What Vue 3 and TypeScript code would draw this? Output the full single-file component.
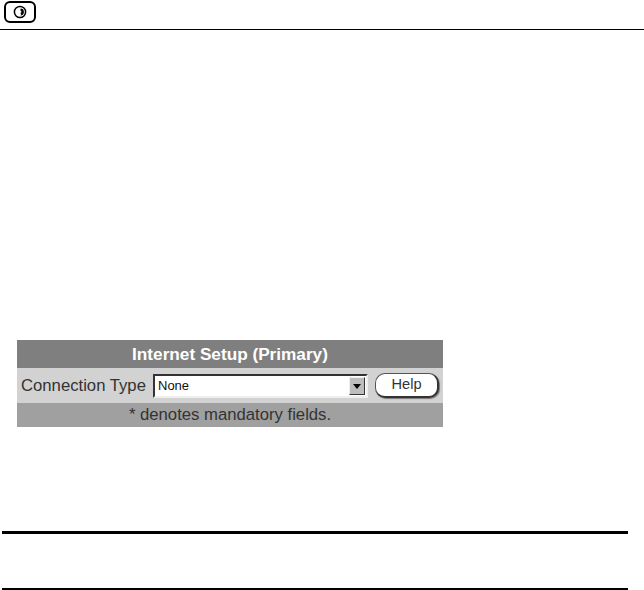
<script setup lang="ts">
const connectionType = 'None'
</script>

<template>
  <div class="page">
    <header class="top">
      <svg class="logo" width="34" height="25" viewBox="0 0 34 25">
        <rect x="1" y="1" width="30" height="20" rx="5" fill="#fff" stroke="#000" stroke-width="2" />
        <circle cx="16" cy="11" r="5.6" fill="#fff" stroke="#000" stroke-width="1.5" />
        <path d="M16.5 7.6a3.4 3.4 0 0 1 0 6.8a1.5 1.5 0 0 0 -.3-2.4a1.3 1.3 0 0 0 -.2-2.6a1.4 1.4 0 0 0 .5-1.8z" fill="#000" />
      </svg>
    </header>

    <section class="panel">
      <div class="title">Internet Setup (Primary)</div>
      <div class="row">
        <span class="label">Connection Type</span>
        <div class="select">
          <span class="value">{{ connectionType }}</span>
          <span class="arrow"></span>
        </div>
        <div class="help">Help</div>
      </div>
      <div class="note">* denotes mandatory fields.</div>
    </section>

    <div class="footer">
      <div class="rule thick"></div>
      <div class="rule thin"></div>
    </div>
  </div>
</template>

<style>
html,
body {
  margin: 0;
  background: #fff;
}
</style>

<style scoped>
.page {
  width: 644px;
  height: 590px;
  overflow: hidden;
  font-family: "Liberation Sans", Arial, sans-serif;
  color: #333;
}

.top {
  height: 29px;
  border-bottom: 1px solid #000;
  padding-left: 4px;
}

.logo {
  display: block;
  padding-top: 1px;
}

.panel {
  width: 426px;
  margin: 310px 0 0 17px;
  font-size: 16.7px;
}

.title {
  height: 28px;
  line-height: 28px;
  background: #7f7f7f;
  color: #fff;
  font-size: 17.2px;
  font-weight: bold;
  text-align: center;
}

.row {
  height: 35px;
  background: #d2d2d2;
  display: flex;
  align-items: center;
  padding-left: 4px;
}

.label {
  width: 132px;
  white-space: nowrap;
}

.select {
  width: 215px;
  height: 24px;
  box-sizing: border-box;
  background: #fff;
  border: 2px solid;
  border-color: #333 #eee #eee #333;
  display: flex;
  align-items: center;
  justify-content: space-between;
  font-size: 13px;
  padding-left: 3px;
  padding-right: 1px;
  color: #111;
}

.arrow {
  width: 16px;
  height: 18px;
  background: #bdbdbd;
  border: 1px solid;
  border-color: #eee #333 #333 #eee;
  box-sizing: border-box;
  position: relative;
}

.arrow::after {
  content: '';
  position: absolute;
  left: 3px;
  top: 6px;
  border: 4px solid transparent;
  border-top: 5px solid #000;
  border-bottom: 0;
}

.help {
  width: 64px;
  height: 25px;
  margin-left: 7px;
  box-sizing: border-box;
  background: #fff;
  border: 1px solid #555;
  border-right: 2px solid #333;
  border-bottom: 2px solid #333;
  border-radius: 10px;
  box-shadow: 1px 1px 1px #777;
  text-align: center;
  line-height: 21px;
  font-size: 14.6px;
}

.note {
  height: 24px;
  line-height: 24px;
  background: #a0a0a0;
  text-align: center;
}

.footer {
  margin: 104px 0 0 2px;
  width: 626px;
}

.rule {
  background: #000;
}

.thick {
  height: 3px;
}

.thin {
  height: 2px;
  margin-top: 54px;
}
</style>
